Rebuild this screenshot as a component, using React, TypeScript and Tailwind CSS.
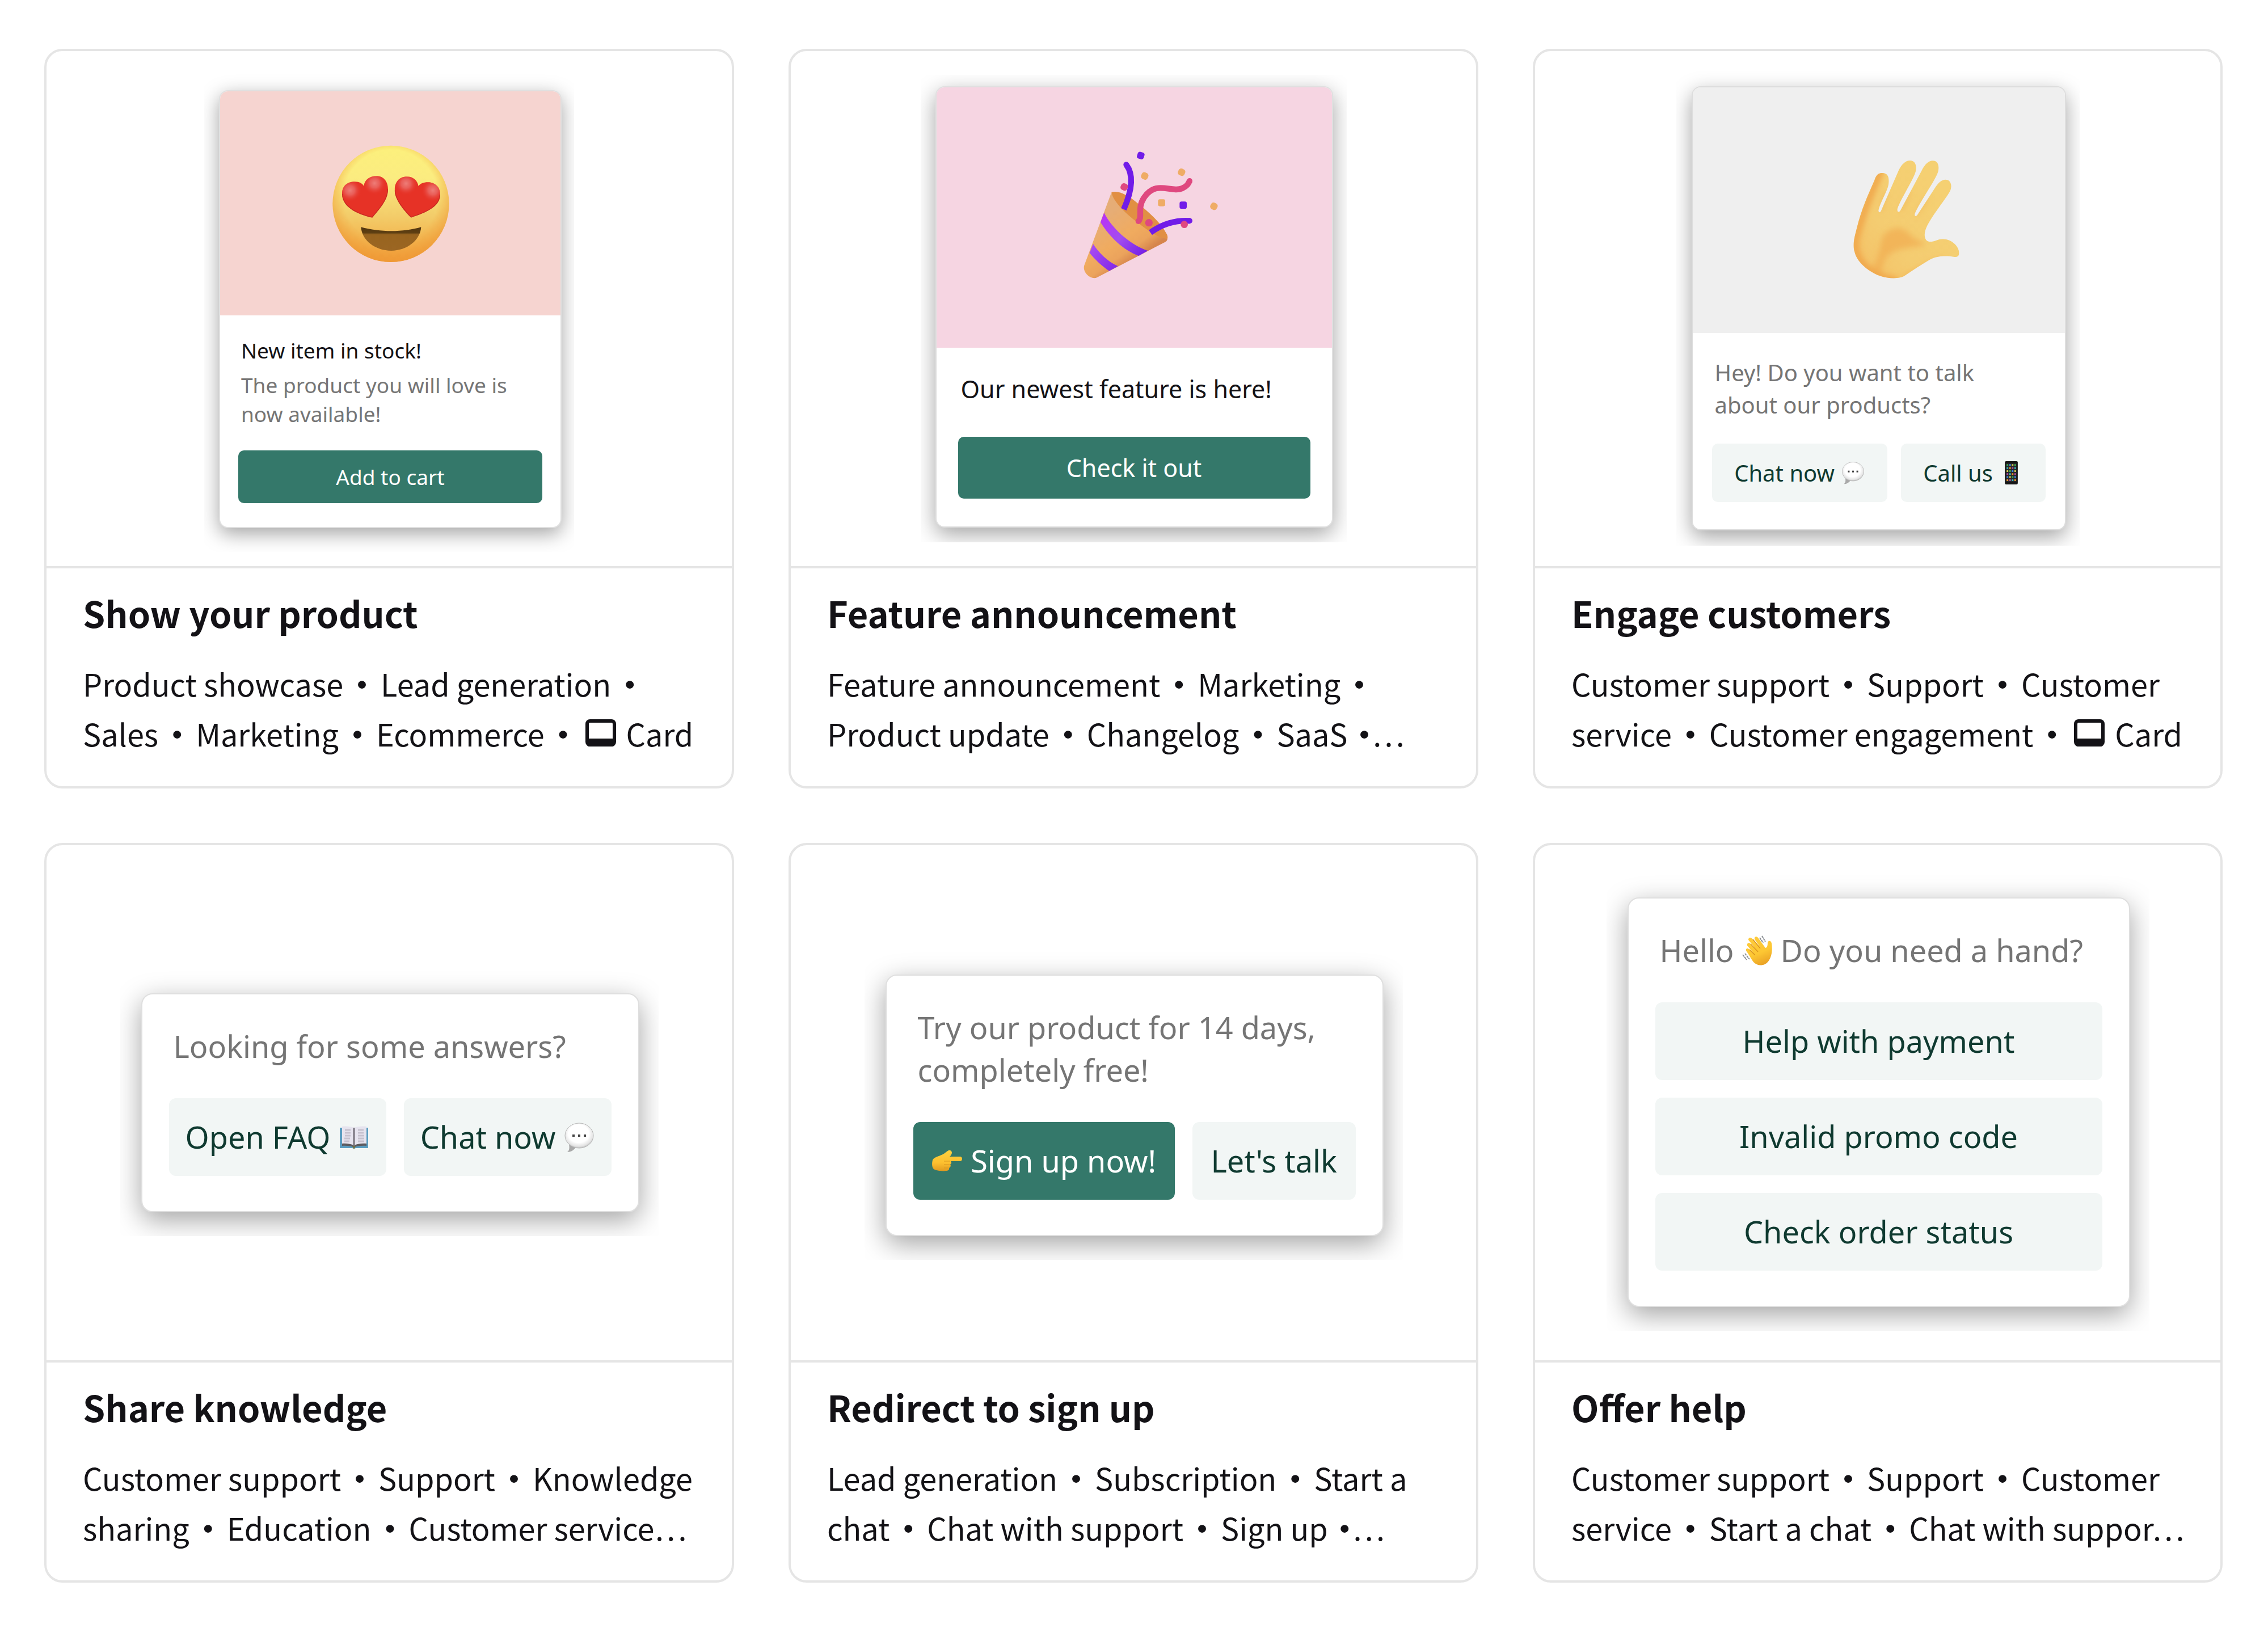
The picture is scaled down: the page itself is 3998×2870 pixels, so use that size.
import type { ReactNode } from "react";

type IconProps = { className?: string };

function HeartEyes() {
  return (
    <svg viewBox="-97 -97 900 900" className="size-[300px]" aria-hidden="true">
      <defs>
        <linearGradient id="faceBase" x1="0" y1="0" x2="0" y2="1">
          <stop offset="0" stopColor="#fcf07c" />
          <stop offset="0.28" stopColor="#fbec80" />
          <stop offset="0.6" stopColor="#f3cd6a" />
          <stop offset="0.85" stopColor="#f2b04a" />
          <stop offset="1" stopColor="#f09c38" />
        </linearGradient>
        <radialGradient id="faceRim" cx="0.5" cy="0.44" r="0.56">
          <stop offset="0.72" stopColor="#f09a35" stopOpacity="0" />
          <stop offset="1" stopColor="#ef9835" stopOpacity="0.75" />
        </radialGradient>
        <radialGradient id="heartGlow">
          <stop offset="0" stopColor="#ee7d78" />
          <stop offset="0.4" stopColor="#ea6661" stopOpacity="0.85" />
          <stop offset="1" stopColor="#e63226" stopOpacity="0" />
        </radialGradient>
        <linearGradient id="mouth" x1="0" y1="0" x2="0" y2="1">
          <stop offset="0" stopColor="#503510" />
          <stop offset="0.24" stopColor="#5e3f12" />
          <stop offset="0.32" stopColor="#98641f" />
          <stop offset="1" stopColor="#9b6623" />
        </linearGradient>
        <clipPath id="heartLeft">
          <path d="M258 430C205 418 98 385 98 304C98 260 128 240 165 240C190 240 207 250 213 264C216 230 245 210 280 210C318 210 341 240 341 280C341 340 290 390 258 430Z" />
        </clipPath>
        <clipPath id="heartRight">
          <path d="M463 430C425 392 376 335 376 284C376 242 402 213 440 213C476 213 498 236 502 264C510 250 528 243 552 243C590 243 617 268 617 308C617 384 510 412 463 430Z" />
        </clipPath>
      </defs>
      <circle cx="356" cy="357" r="308" fill="url(#faceBase)" />
      <circle cx="356" cy="357" r="308" fill="url(#faceRim)" />
      <g clipPath="url(#heartLeft)">
        <rect x="90" y="200" width="260" height="240" fill="#e63226" />
        <circle cx="140" cy="285" r="62" fill="url(#heartGlow)" />
        <circle cx="270" cy="248" r="62" fill="url(#heartGlow)" />
        <path d="M98 304C98 385 205 418 258 430C290 390 341 340 341 280" fill="none" stroke="#b0231f" strokeWidth="8" strokeOpacity="0.6" />
      </g>
      <g clipPath="url(#heartRight)">
        <rect x="370" y="200" width="260" height="240" fill="#e63226" />
        <circle cx="436" cy="250" r="62" fill="url(#heartGlow)" />
        <circle cx="578" cy="285" r="62" fill="url(#heartGlow)" />
        <path d="M376 284C376 335 425 392 463 430C510 412 617 384 617 308" fill="none" stroke="#b0231f" strokeWidth="8" strokeOpacity="0.6" />
      </g>
      <path d="M198 480C300 508 420 508 516 480C512 550 440 605 358 605C275 605 203 552 198 480Z" fill="url(#mouth)" />
    </svg>
  );
}

function PartyPopper() {
  return (
    <svg viewBox="-95 -21 900 900" className="size-[300px]" aria-hidden="true">
      <defs>
        <linearGradient id="cone" x1="180" y1="430" x2="340" y2="660" gradientUnits="userSpaceOnUse">
          <stop offset="0" stopColor="#e6ad76" />
          <stop offset="0.55" stopColor="#f0ab5f" />
          <stop offset="0.8" stopColor="#eba35c" />
          <stop offset="1" stopColor="#d6854c" />
        </linearGradient>
        <linearGradient id="stripe" x1="190" y1="430" x2="400" y2="620" gradientUnits="userSpaceOnUse">
          <stop offset="0" stopColor="#b734f5" />
          <stop offset="0.5" stopColor="#a24df0" />
          <stop offset="1" stopColor="#7721e6" />
        </linearGradient>
        <linearGradient id="stripeLow" x1="125" y1="580" x2="250" y2="700" gradientUnits="userSpaceOnUse">
          <stop offset="0" stopColor="#a94df2" />
          <stop offset="1" stopColor="#842ae8" />
        </linearGradient>
      </defs>
      <path d="M236 294C270 280 330 312 372 350C440 402 500 460 530 518C536 535 532 548 520 556C400 540 250 400 236 294Z" fill="#e18f43" />
      <path d="M236 294C244 345 320 415 385 462C440 505 490 538 531 540C530 550 526 554 518 558L160 744C130 760 80 720 92 680Z" fill="url(#cone)" />
      <path d="M197 402C235 480 330 570 428 603L380 630C300 600 225 530 178 452Z" fill="url(#stripe)" />
      <path d="M139 567C165 610 215 660 270 685L224 710C180 680 145 645 120 614Z" fill="url(#stripeLow)" />
      <g fill="none" strokeWidth="31">
        <path d="M314 148C358 205 342 290 301 384" stroke="#711ce8" />
        <path d="M378 448C402 425 370 380 408 322C475 225 550 300 610 273C635 262 642 250 649 234" stroke="#df487f" />
        <path d="M442 507C500 465 570 440 650 445" stroke="#711ce8" />
      </g>
      <circle cx="314" cy="148" r="15" fill="#711ce8" />
      <circle cx="649" cy="234" r="15" fill="#df487f" />
      <circle cx="378" cy="447" r="15" fill="#df487f" />
      <circle cx="649" cy="445" r="15" fill="#711ce8" />
      <rect x="372" y="81" width="37" height="37" rx="12" fill="#711ce8" transform="rotate(18 390 100)" />
      <rect x="596" y="343" width="38" height="38" rx="10" fill="#711ce8" />
      <rect x="393" y="189" width="37" height="37" rx="14" fill="#efac65" transform="rotate(25 411 208)" />
      <rect x="588" y="169" width="37" height="37" rx="14" fill="#efac65" transform="rotate(25 606 188)" />
      <rect x="482" y="331" width="38" height="37" rx="10" fill="#efac65" />
      <rect x="759" y="349" width="37" height="37" rx="14" fill="#efac65" transform="rotate(30 777 368)" />
      <rect x="285" y="247" width="37" height="37" rx="14" fill="#df487f" transform="rotate(25 303 265)" />
      <circle cx="434" cy="455" r="20" fill="#df487f" />
      <circle cx="621" cy="464" r="19" fill="#df487f" />
    </svg>
  );
}

function OpenHand() {
  return (
    <svg viewBox="-237 -120 900 900" className="size-[300px]" aria-hidden="true">
      <defs>
        <linearGradient id="handBase" x1="90" y1="560" x2="520" y2="200" gradientUnits="userSpaceOnUse">
          <stop offset="0" stopColor="#f4c368" />
          <stop offset="0.35" stopColor="#f4cc71" />
          <stop offset="1" stopColor="#f5d072" />
        </linearGradient>
        <filter id="soft" x="-50%" y="-50%" width="200%" height="200%">
          <feGaussianBlur stdDeviation="16" />
        </filter>
        <clipPath id="handShape">
          <path d="M190 170C200 138 214 132 232 132C258 132 268 150 265 185C262 225 222 280 211 330C212 342 219 342 224 334L318 118C335 84 355 66 378 66C402 66 414 88 409 118C403 158 330 265 311 322C309 340 320 342 327 330L438 122C456 86 475 67 498 67C522 67 534 88 527 122C517 165 425 290 403 348C401 363 410 364 418 352L508 214C526 184 545 167 566 167C590 167 602 192 592 222C582 250 510 335 470 408C456 436 452 458 458 476C466 500 490 498 518 488C550 474 590 482 615 508C634 528 640 548 636 564C632 576 624 577 608 575C575 570 520 568 480 592C440 616 395 645 350 675C325 692 270 692 225 678C165 658 100 610 85 550C72 510 85 470 96 425C122 320 155 250 190 170Z" />
        </clipPath>
      </defs>
      <g clipPath="url(#handShape)">
        <rect x="60" y="50" width="600" height="660" fill="url(#handBase)" />
        <g filter="url(#soft)">
          <path d="M225 110C165 250 120 360 90 480C70 600 180 690 310 700" fill="none" stroke="#f0a548" strokeWidth="38" />
          <path d="M235 460C300 400 350 420 390 470C430 495 470 500 450 515C390 525 300 530 260 570C230 600 230 640 225 680L170 650C220 580 215 520 235 460Z" fill="#f1ab4e" fillOpacity="0.7" />
          <path d="M225 335L250 230M325 335L380 230M410 355L470 260" stroke="#f2b355" strokeWidth="18" strokeOpacity="0.6" />
          <path d="M330 690C400 660 470 600 560 585" fill="none" stroke="#f2b050" strokeWidth="16" strokeOpacity="0.8" />
        </g>
      </g>
    </svg>
  );
}

function SpeechBubble({ className }: IconProps) {
  return (
    <svg viewBox="0 0 54 54" className={className} aria-hidden="true">
      <defs>
        <radialGradient id="bubble" cx="0.48" cy="0.42" r="0.58">
          <stop offset="0.62" stopColor="#ffffff" />
          <stop offset="0.88" stopColor="#e4e4e4" />
          <stop offset="1" stopColor="#bdbdbd" />
        </radialGradient>
      </defs>
      <path d="M6 53C10 50 10 45 9 40L21 45C17 50 12 53 6 53Z" fill="#a9a9a9" />
      <ellipse cx="27" cy="24" rx="25" ry="22" fill="url(#bubble)" stroke="#b4b4b4" strokeWidth="1" />
      <rect x="15" y="22" width="4" height="4" fill="#444444" />
      <rect x="25" y="22" width="4" height="4" fill="#444444" />
      <rect x="35" y="22" width="4" height="4" fill="#444444" />
    </svg>
  );
}

function OpenBook({ className }: IconProps) {
  return (
    <svg viewBox="0 0 54 54" className={className} aria-hidden="true">
      <path d="M2 10H52V46H30L27 47L24 46H2Z" fill="#5a9cc0" />
      <path d="M6 8C14 7 22 8 27 10C32 8 42 7 49 8V41C40 39 32 41 27 42C22 41 14 39 6 41Z" fill="#e6e3ee" />
      <path d="M6 38C14 37 22 39 27 41C32 39 40 37 49 38V42C40 41 32 43 27 44C22 43 14 41 6 42Z" fill="#5d5a5e" />
      <path d="M27 10V42" stroke="#77727c" strokeWidth="3" />
      <path d="M11 14H21M11 19H21M11 24H21M10 29H20M10 34H19M34 14H44M34 19H44M34 24H45M34 29H45M34 34H45" stroke="#c6c1ce" strokeWidth="3" />
      <path d="M24 43H30L27 48Z" fill="#74733e" />
    </svg>
  );
}

function Phone({ className }: IconProps) {
  const hues = ["#3fb050", "#e8992f", "#3e89e0", "#b14ca0", "#d5cd55", "#3ab8bd"];
  return (
    <svg viewBox="0 0 54 54" className={className} aria-hidden="true">
      <rect x="12" y="0" width="30" height="54" rx="3" fill="#161616" />
      <rect x="15" y="5" width="24" height="43" fill="#27272b" />
      {[0, 1, 2, 3, 4, 5].map((row) =>
        [0, 1, 2, 3].map((col) => (
          <rect key={`${row}-${col}`} x={16 + col * 6} y={7 + row * 7} width="4" height="4" rx="1" fill={hues[(row * 5 + col * 2) % 6]} />
        )),
      )}
    </svg>
  );
}

function PointRight({ className }: IconProps) {
  return (
    <svg viewBox="0 0 54 54" className={className} aria-hidden="true">
      <defs>
        <linearGradient id="point" x1="0" y1="0" x2="0" y2="1">
          <stop offset="0" stopColor="#ffd23f" />
          <stop offset="0.6" stopColor="#fdc02f" />
          <stop offset="1" stopColor="#e09a20" />
        </linearGradient>
      </defs>
      <path d="M2 26C4 21 14 19 20 16C26 13 29 8 33 9C38 11 36 17 32 20H51C55 21 55 27 51 28H34C36 30 35 33 33 34C35 36 33 39 31 40C32 43 29 45 26 45C20 46 8 45 4 42C0 38 1 31 2 26Z" fill="url(#point)" />
      <path d="M22 28H33M22 34H32M22 40H30" stroke="#d9961f" strokeWidth="1" />
    </svg>
  );
}

function WavingHand({ className }: IconProps) {
  return (
    <svg viewBox="0 0 54 54" className={className} aria-hidden="true">
      <defs>
        <linearGradient id="wave" x1="0.2" y1="0" x2="0.6" y2="1">
          <stop offset="0" stopColor="#fecb3c" />
          <stop offset="0.6" stopColor="#fdc733" />
          <stop offset="1" stopColor="#eaa225" />
        </linearGradient>
      </defs>
      <path d="M20 47C15 40 12 34 7 27C6 23 9 22 12 24L20 31L9 18C8 14 11 12 14 14L25 25L11 8C11 3 15 3 18 6L31 20L22 7C21 2 25 1 28 4L41 22C44 22 45 18 45 13C46 8 51 9 52 14C54 26 52 38 46 46C39 55 26 54 20 47Z" fill="url(#wave)" />
      <path d="M13 25L23 35M15 15L28 29M19 7L32 23" stroke="#d9931f" strokeWidth="1.5" fill="none" />
      <path d="M31 4L37 13M35 1L41 11M1 34L8 43M5 32L13 42" stroke="#8b8f94" strokeWidth="2" fill="none" strokeDasharray="4 1" />
    </svg>
  );
}

function CardGlyph() {
  return (
    <svg viewBox="0 0 54 48" className="mr-[18px] ml-[6px] inline-block h-[48px] w-[54px] align-baseline" aria-hidden="true">
      <rect x="3" y="3" width="48" height="42" rx="5" fill="none" stroke="#131216" strokeWidth="6" />
      <path d="M2 34H52V42Q52 48 46 48H8Q2 48 2 42Z" fill="#131216" />
    </svg>
  );
}

const DOT = "•";
const DOT_MORE = "•…";
const CARD = "card-glyph";

function TagPiece({ piece }: { piece: string }) {
  if (piece === DOT) return <span className="mx-[6px] font-bold">•</span>;
  if (piece === DOT_MORE) {
    return (
      <span className="ml-[16px] [font-feature-settings:'palt','pwid']">
        <span className="font-bold">•</span>…
      </span>
    );
  }
  if (piece === CARD) return <CardGlyph />;
  return <span>{piece}</span>;
}

function TemplateCard({ title, tagLines, children }: { title: string; tagLines: string[][]; children: ReactNode }) {
  return (
    <article className="flex flex-col rounded-[32px] border-4 border-[#e5e5e5] bg-white">
      <div className="flex h-[912px] items-center justify-center border-b-4 border-[#e5e5e5]">{children}</div>
      <div className="pt-[38px] pr-[40px] pb-[49px] pl-[64px]">
        <h2 className="mb-[41px] text-[63px] leading-[80px] font-semibold">{title}</h2>
        {tagLines.map((line) => (
          <p key={line.join()} className="text-[54px] leading-[88px] whitespace-nowrap">
            {line.map((piece, index) => (
              <TagPiece key={index} piece={piece} />
            ))}
          </p>
        ))}
      </div>
    </article>
  );
}

function Button({ primary, className, children }: { primary?: boolean; className: string; children: ReactNode }) {
  return (
    <button
      type="button"
      className={`flex flex-auto items-center justify-center whitespace-nowrap ${primary ? "bg-[#34786a] text-white" : "bg-[#f2f6f5] text-[#0f3a30]"} ${className}`}
    >
      {children}
    </button>
  );
}

const popupFont = "font-['Noto_Sans',sans-serif]";
const largeButton = "h-[137px] rounded-[12px] px-[28px] gap-[15px]";

function LargePopup({ frame, width, children }: { frame: string; width: string; children: ReactNode }) {
  return (
    <div className={`overflow-hidden ${frame}`}>
      <div className={`rounded-[20px] border-2 border-[#dfdfdf] bg-white px-[47px] pt-[54px] pb-[62px] text-[54px] leading-[75px] shadow-[0_14px_48px_rgba(0,0,0,0.36)] ${popupFont} ${width}`}>
        {children}
      </div>
    </div>
  );
}

const promptText = "px-[8px] text-[#757575]";

export default function App() {
  return (
    <main className="bg-white pt-[86px] pr-[80px] pb-[80px] pl-[78px] font-['Noto_Sans_CJK_SC',sans-serif] text-[#131216]">
      <div className="grid grid-cols-3 gap-[96px]">
        <TemplateCard
          title="Show your product"
          tagLines={[
            ["Product showcase", DOT, "Lead generation", DOT],
            ["Sales", DOT, "Marketing", DOT, "Ecommerce", DOT, CARD, "Card"],
          ]}
        >
          <div className="overflow-hidden pt-[43px] pr-[22px] pb-[42px] pl-[26px]">
            <div className={`w-[604px] overflow-hidden rounded-[16px] border-2 border-[#e0e0e0] bg-white text-[37px] leading-[51px] shadow-[0_10px_34px_rgba(0,0,0,0.36)] ${popupFont}`}>
              <div className="flex h-[395px] items-center justify-center bg-[#f6d4d0]">
                <HeartEyes />
              </div>
              <div className="px-[32px] pt-[36px] pb-[42px]">
                <p className="px-[5px]">New item in stock!</p>
                <p className="mt-[10px] px-[5px] text-[#757575]">The product you will love is now available!</p>
                <div className="mt-[39px] flex">
                  <Button primary className="h-[93px] rounded-[10px]">Add to cart</Button>
                </div>
              </div>
            </div>
          </div>
        </TemplateCard>

        <TemplateCard
          title="Feature announcement"
          tagLines={[
            ["Feature announcement", DOT, "Marketing", DOT],
            ["Product update", DOT, "Changelog", DOT, "SaaS", DOT_MORE],
          ]}
        >
          <div className="overflow-hidden pt-[20px] pr-[24px] pb-[26px] pl-[26px]">
            <div className={`w-[701px] overflow-hidden rounded-[16px] border-2 border-[#e0e0e0] bg-white text-[43px] leading-[60px] shadow-[0_12px_38px_rgba(0,0,0,0.36)] ${popupFont}`}>
              <div className="flex h-[459px] items-center justify-center bg-[#f6d5e2]">
                <PartyPopper />
              </div>
              <div className="px-[38px] pt-[43px] pb-[49px]">
                <p className="px-[5px]">Our newest feature is here!</p>
                <div className="mt-[54px] flex">
                  <Button primary className="h-[109px] rounded-[10px]">Check it out</Button>
                </div>
              </div>
            </div>
          </div>
        </TemplateCard>

        <TemplateCard
          title="Engage customers"
          tagLines={[
            ["Customer support", DOT, "Support", DOT, "Customer"],
            ["service", DOT, "Customer engagement", DOT, CARD, "Card"],
          ]}
        >
          <div className="overflow-hidden pt-[26px] pr-[24px] pb-[27px] pl-[27px]">
            <div className={`w-[660px] overflow-hidden rounded-[16px] border-2 border-[#dddddd] bg-white text-[40px] leading-[57px] shadow-[0_12px_36px_rgba(0,0,0,0.36)] ${popupFont}`}>
              <div className="flex h-[433px] items-center justify-center bg-[#efefef]">
                <OpenHand />
              </div>
              <div className="px-[34px] pt-[41px] pb-[48px]">
                <p className="pr-[70px] pl-[5px] text-[#757575]">Hey! Do you want to talk about our products?</p>
                <div className="mt-[40px] flex gap-[24px]">
                  <Button className="h-[103px] gap-[12px] rounded-[10px] px-[36px]">
                    Chat now <SpeechBubble className="size-[41px]" />
                  </Button>
                  <Button className="h-[103px] gap-[12px] rounded-[10px] px-[36px]">
                    Call us <Phone className="size-[41px]" />
                  </Button>
                </div>
              </div>
            </div>
          </div>
        </TemplateCard>

        <TemplateCard
          title="Share knowledge"
          tagLines={[
            ["Customer support", DOT, "Support", DOT, "Knowledge"],
            ["sharing", DOT, "Education", DOT, "Customer service…"],
          ]}
        >
          <LargePopup frame="pt-[42px] pr-[34px] pb-[42px] pl-[37px]" width="w-[878px]">
            <p className={promptText}>Looking for some answers?</p>
            <div className="mt-[54px] flex gap-[31px]">
              <Button className={largeButton}>
                Open FAQ <OpenBook className="size-[54px]" />
              </Button>
              <Button className={largeButton}>
                Chat now <SpeechBubble className="size-[54px]" />
              </Button>
            </div>
          </LargePopup>
        </TemplateCard>

        <TemplateCard
          title="Redirect to sign up"
          tagLines={[
            ["Lead generation", DOT, "Subscription", DOT, "Start a"],
            ["chat", DOT, "Chat with support", DOT, "Sign up", DOT_MORE],
          ]}
        >
          <LargePopup frame="pt-[50px] pr-[34px] pb-[42px] pl-[37px]" width="w-[878px]">
            <p className={promptText}>Try our product for 14 days, completely free!</p>
            <div className="mt-[54px] flex gap-[31px]">
              <Button primary className={largeButton}>
                <PointRight className="size-[54px]" /> Sign up now!
              </Button>
              <Button className={largeButton}>Let's talk</Button>
            </div>
          </LargePopup>
        </TemplateCard>

        <TemplateCard
          title="Offer help"
          tagLines={[
            ["Customer support", DOT, "Support", DOT, "Customer"],
            ["service", DOT, "Start a chat", DOT, "Chat with suppor…"],
          ]}
        >
          <LargePopup frame="pt-[39px] pr-[34px] pb-[42px] pl-[37px]" width="w-[886px]">
            <p className={promptText}>
              Hello <WavingHand className="inline-block size-[54px] align-[-7px]" /> Do you need a hand?
            </p>
            <div className="mt-[54px] flex flex-col gap-[31px]">
              <Button className={largeButton}>Help with payment</Button>
              <Button className={largeButton}>Invalid promo code</Button>
              <Button className={largeButton}>Check order status</Button>
            </div>
          </LargePopup>
        </TemplateCard>
      </div>
    </main>
  );
}
